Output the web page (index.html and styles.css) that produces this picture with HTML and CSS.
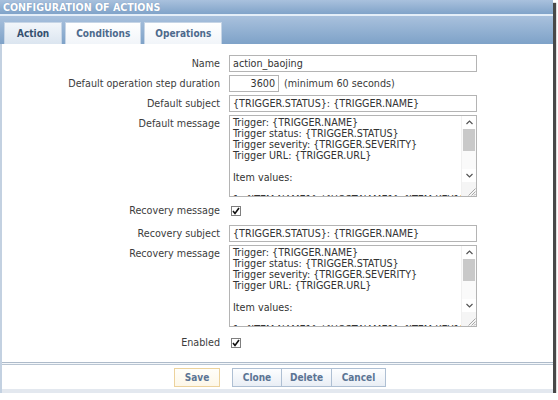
FILE: index.html
```html
<!DOCTYPE html>
<html>
<head>
<meta charset="utf-8">
<link rel="stylesheet" href="styles.css">
</head>
<body>
<div class="window">
  <div class="title">CONFIGURATION OF ACTIONS</div>
  <div class="tabbar">
    <div class="tab active">Action</div>
    <div class="tab">Conditions</div>
    <div class="tab">Operations</div>
  </div>
  <div class="body">
    <div class="form">
      <div class="row">
        <div class="label">Name</div>
        <div class="field"><div class="input wide">action_baojing</div></div>
      </div>
      <div class="row">
        <div class="label">Default operation step duration</div>
        <div class="field"><div class="input num">3600</div><span class="hint">(minimum 60 seconds)</span></div>
      </div>
      <div class="row">
        <div class="label">Default subject</div>
        <div class="field"><div class="input wide">{TRIGGER.STATUS}: {TRIGGER.NAME}</div></div>
      </div>
      <div class="row">
        <div class="label">Default message</div>
        <div class="field">
          <div class="textarea">
            <div class="ta-text">Trigger: {TRIGGER.NAME}
Trigger status: {TRIGGER.STATUS}
Trigger severity: {TRIGGER.SEVERITY}
Trigger URL: {TRIGGER.URL}

Item values:

1. {ITEM.NAME1} ({HOST.NAME1}:{ITEM.KEY1}): {ITEM.VALUE1}</div>
            <div class="scrollbar">
              <div class="sb-btn"><svg width="7" height="5" viewBox="0 0 7 5"><polyline points="0.5,4 3.5,1 6.5,4" fill="none" stroke="#555" stroke-width="1.2"/></svg></div>
              <div class="sb-track"><div class="sb-thumb"></div></div>
              <div class="sb-btn"><svg width="7" height="5" viewBox="0 0 7 5"><polyline points="0.5,1 3.5,4 6.5,1" fill="none" stroke="#555" stroke-width="1.2"/></svg></div>
              <div class="sb-corner"><svg width="9" height="9" viewBox="0 0 9 9"><path d="M8.5 1.5 L1.5 8.5 M8.5 4.5 L4.5 8.5 M8.5 7 L7 8.5" stroke="#a8a8a8" stroke-width="1" fill="none"/></svg></div>
            </div>
          </div>
        </div>
      </div>
      <div class="row cbrow">
        <div class="label">Recovery message</div>
        <div class="field"><span class="checkbox"><svg width="8" height="8" viewBox="0 0 8 8"><path d="M1 4 L3 6.5 L7 1" fill="none" stroke="#111" stroke-width="1.6"/></svg></span></div>
      </div>
      <div class="row">
        <div class="label">Recovery subject</div>
        <div class="field"><div class="input wide">{TRIGGER.STATUS}: {TRIGGER.NAME}</div></div>
      </div>
      <div class="row">
        <div class="label">Recovery message</div>
        <div class="field">
          <div class="textarea">
            <div class="ta-text">Trigger: {TRIGGER.NAME}
Trigger status: {TRIGGER.STATUS}
Trigger severity: {TRIGGER.SEVERITY}
Trigger URL: {TRIGGER.URL}

Item values:

1. {ITEM.NAME1} ({HOST.NAME1}:{ITEM.KEY1}): {ITEM.VALUE1}</div>
            <div class="scrollbar">
              <div class="sb-btn"><svg width="7" height="5" viewBox="0 0 7 5"><polyline points="0.5,4 3.5,1 6.5,4" fill="none" stroke="#555" stroke-width="1.2"/></svg></div>
              <div class="sb-track"><div class="sb-thumb"></div></div>
              <div class="sb-btn"><svg width="7" height="5" viewBox="0 0 7 5"><polyline points="0.5,1 3.5,4 6.5,1" fill="none" stroke="#555" stroke-width="1.2"/></svg></div>
              <div class="sb-corner"><svg width="9" height="9" viewBox="0 0 9 9"><path d="M8.5 1.5 L1.5 8.5 M8.5 4.5 L4.5 8.5 M8.5 7 L7 8.5" stroke="#a8a8a8" stroke-width="1" fill="none"/></svg></div>
            </div>
          </div>
        </div>
      </div>
      <div class="row cbrow last">
        <div class="label">Enabled</div>
        <div class="field"><span class="checkbox"><svg width="8" height="8" viewBox="0 0 8 8"><path d="M1 4 L3 6.5 L7 1" fill="none" stroke="#111" stroke-width="1.6"/></svg></span></div>
      </div>
    </div>
    <div class="sep"></div>
    <div class="footer">
      <button class="btn save">Save</button>
      <div class="group">
        <button class="btn">Clone</button>
        <button class="btn">Delete</button>
        <button class="btn">Cancel</button>
      </div>
    </div>
    <div class="band"></div>
  </div>
</div>
</body>
</html>
```

FILE: styles.css
```css
html, body {
  margin: 0;
  padding: 0;
  background: #ffffff;
}
body {
  font-family: "DejaVu Sans Condensed", "DejaVu Sans", sans-serif;
  font-size: 10.7px;
  color: #3a3a3a;
}
.window {
  width: 553px;
  height: 393px;
  display: flex;
  flex-direction: column;
  box-shadow: 3px 3px 1px rgba(40, 40, 40, 0.85);
  background: #fff;
}
.title {
  height: 14px;
  line-height: 14px;
  padding-left: 3px;
  font-weight: bold;
  font-size: 10.6px;
  color: #ffffff;
  background: linear-gradient(#a9c1dd, #80a3c9);
  text-shadow: 0 0 1px #6f8fb5;
}
.tabbar {
  height: 30px;
  border-top: 2px solid #e4eef8;
  box-sizing: border-box;
  background: linear-gradient(#a9c1dd, #7ea2c8);
  display: flex;
  align-items: flex-end;
  padding-left: 4px;
  gap: 3px;
}
.tab {
  height: 22px;
  line-height: 22px;
  box-sizing: border-box;
  padding: 0 10px;
  font-weight: bold;
  font-size: 10px;
  color: #4d6a8c;
  background: linear-gradient(#ffffff, #f1f5f9);
  border: 1px solid #c6d5e6;
  border-bottom: none;
}
.tab.active {
  color: #34506f;
  background: linear-gradient(#f2f6fa, #dbe5f0);
  padding: 0 12px;
}
.body {
  flex: 1;
  display: flex;
  flex-direction: column;
  border-left: 2px solid #c3d1e1;
}
.form {
  flex: 1;
  display: flex;
  flex-direction: column;
  gap: 3px;
  padding-top: 11px;
}
.row {
  display: grid;
  grid-template-columns: 218px 1fr;
  column-gap: 9px;
}
.label {
  text-align: right;
  line-height: 17px;
  color: #3c3c3c;
}
.field {
  display: flex;
  align-items: flex-start;
}
.input {
  height: 17px;
  line-height: 15px;
  box-sizing: border-box;
  border: 1px solid #b4b4b4;
  padding: 0 3px;
  color: #333;
  white-space: nowrap;
  background: #fff;
}
.input.wide {
  width: 248px;
}
.input.num {
  width: 50px;
  text-align: right;
}
.hint {
  line-height: 17px;
  margin-left: 5px;
}
.cbrow {
  height: 22px;
}
.cbrow.last {
  margin-top: 2px;
}
.cbrow .label {
  line-height: 22px;
}
.cbrow .field {
  align-items: center;
}
.checkbox {
  width: 10px;
  height: 10px;
  box-sizing: border-box;
  border: 1px solid #7f7f7f;
  margin-left: 2px;
  display: flex;
  align-items: center;
  justify-content: center;
  background: #fff;
}
.textarea {
  width: 248px;
  height: 82px;
  box-sizing: border-box;
  border: 1px solid #b4b4b4;
  display: flex;
  background: #fff;
  overflow: hidden;
}
.ta-text {
  flex: 1;
  overflow: hidden;
  white-space: pre;
  line-height: 11px;
  padding: 1px 3px 0;
  color: #333;
}
.scrollbar {
  width: 14px;
  display: flex;
  flex-direction: column;
  border-left: 1px solid #f0f0f0;
}
.sb-btn {
  height: 13px;
  display: flex;
  align-items: center;
  justify-content: center;
}
.sb-track {
  flex: 1;
  background: #fafafa;
}
.sb-thumb {
  height: 22px;
  background: #c9c9c9;
  margin: 0 1px;
}
.sb-corner {
  height: 14px;
  display: flex;
  align-items: flex-end;
  justify-content: flex-end;
  background: #f5f5f5;
}
.sep {
  height: 1px;
  background: #f4f7fa;
  border-top: 1px solid #aebbca;
  border-bottom: 1px solid #b9c5d2;
  margin-top: 8px;
}
.footer {
  height: 24px;
  display: flex;
  align-items: center;
  padding-left: 172px;
  gap: 12px;
}
.group {
  display: flex;
}
.btn {
  font-family: "DejaVu Sans Condensed", "DejaVu Sans", sans-serif;
  font-size: 10px;
  font-weight: bold;
  color: #5b7494;
  height: 19px;
  padding: 0;
  margin: 0;
  border: 1px solid #aebfd3;
  background: linear-gradient(#fdfeff, #e9eef5);
  width: 50px;
}
.group .btn + .btn {
  margin-left: -1px;
}
.group .btn:nth-child(2) {
  width: 51px;
}
.group .btn:nth-child(3) {
  width: 55px;
}
.btn.save {
  width: 46px;
  border-color: #ecd29c;
  background: linear-gradient(#fffefa, #fdf7e8);
}
.band {
  height: 4px;
  background: #e3e8ef;
}
```
